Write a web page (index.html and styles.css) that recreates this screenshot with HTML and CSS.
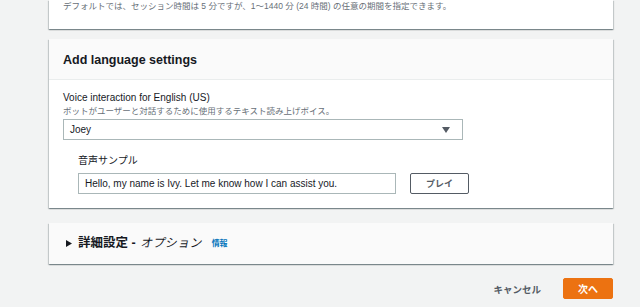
FILE: index.html
```html
<!DOCTYPE html>
<html lang="ja">
<head>
    <meta charset="UTF-8">
    <meta name="viewport" content="width=device-width, initial-scale=1.0">
    <title>ボットの作成</title>
    <link rel="stylesheet" href="styles.css">
</head>
<body>
    <div class="page">
        <!-- セッションタイムアウトの続き -->
        <div class="card card-top">
            <p class="hint">デフォルトでは、セッション時間は 5 分ですが、1〜1440 分 (24 時間) の任意の期間を指定できます。</p>
        </div>

        <div class="card">
            <div class="card-header">
                <h2>Add language settings</h2>
            </div>
            <div class="card-body">
                <div class="field-label">Voice interaction for English (US)</div>
                <div class="field-desc">ボットがユーザーと対話するために使用するテキスト読み上げボイス。</div>
                <div class="select">
                    <span>Joey</span>
                    <svg class="caret" width="8" height="6" viewBox="0 0 8 6"><path d="M0 0h8L4 6z" fill="#545b64"/></svg>
                </div>

                <div class="sample">
                    <div class="field-label">音声サンプル</div>
                    <div class="sample-row">
                        <input type="text" class="text-input" value="Hello, my name is Ivy. Let me know how I can assist you.">
                        <button class="btn-normal">プレイ</button>
                    </div>
                </div>
            </div>
        </div>

        <div class="card card-expand">
            <svg class="expand-icon" width="6" height="7" viewBox="0 0 6 7"><path d="M0 0l6 3.5L0 7z" fill="#16191f"/></svg>
            <span class="expand-title">詳細設定 - </span>
            <span class="expand-opt">オプション</span>
            <a href="#" class="info-link">情報</a>
        </div>

        <div class="actions">
            <button class="btn-link">キャンセル</button>
            <button class="btn-primary">次へ</button>
        </div>
    </div>
</body>
</html>
```

FILE: styles.css
```css
/* 全体 */
body {
    margin: 0;
    background-color: #f2f3f3;
    font-family: "Liberation Sans", "Noto Sans CJK JP", sans-serif;
    color: #16191f;
}

.page {
    width: 564px;
    margin-left: 49px;
}

/* カード */
.card {
    background-color: #fff;
    box-shadow: 0 1px 1px 0 rgba(0, 28, 36, 0.3), 1px 1px 1px 0 rgba(0, 28, 36, 0.15), -1px 1px 1px 0 rgba(0, 28, 36, 0.15);
    margin-bottom: 10px;
}

.card-top {
    padding: 0 14px 17px;
}

.hint {
    margin: 0;
    font-size: 8.5px;
    line-height: 12px;
    color: #687078;
}

.card-header {
    background-color: #fafafa;
    border-bottom: 1px solid #eaeded;
    padding: 13px 14px 11px;
}

h2 {
    margin: 0;
    font-size: 12.5px;
    line-height: 16px;
    font-weight: bold;
}

.card-body {
    padding: 11px 14px 14px;
}

.field-label {
    font-size: 10px;
    line-height: 14px;
}

.field-desc {
    font-size: 8.5px;
    line-height: 12px;
    color: #687078;
}

.select {
    margin-top: 2px;
    width: 400px;
    height: 21px;
    box-sizing: border-box;
    border: 1px solid #aab7b8;
    display: flex;
    align-items: center;
    justify-content: space-between;
    padding: 0 12px 0 6px;
    font-size: 10px;
}

.sample {
    margin-top: 14px;
    padding-left: 15px;
}

.sample-row {
    margin-top: 5px;
    display: flex;
    gap: 14px;
}

.text-input {
    width: 318px;
    height: 21px;
    box-sizing: border-box;
    border: 1px solid #aab7b8;
    padding: 0 6px;
    font-family: inherit;
    font-size: 10px;
    color: #16191f;
    margin: 0;
}

.btn-normal {
    width: 59px;
    height: 21px;
    background: #fff;
    border: 1px solid #545b64;
    border-radius: 2px;
    color: #545b64;
    font-family: inherit;
    font-size: 9px;
    font-weight: bold;
    padding: 0;
}

/* 折りたたみ */
.card-expand {
    margin-top: 15px;
    background-color: #fafafa;
    padding: 12px 17px;
    display: flex;
    align-items: center;
    line-height: 17px;
}

.expand-icon {
    margin-right: 6px;
}

.expand-title {
    font-size: 12.5px;
    font-weight: bold;
    white-space: pre;
}

/* 和文は斜体がないので傾けて表示 */
.expand-opt {
    display: inline-block;
    font-size: 12px;
    letter-spacing: 0.3px;
    color: #16191f;
    margin-left: 2px;
    transform: skewX(-12deg);
}

.info-link {
    margin-left: 9px;
    font-size: 8px;
    font-weight: bold;
    color: #0073bb;
    text-decoration: none;
}

/* ボタン */
.actions {
    margin-top: 14px;
    display: flex;
    justify-content: flex-end;
    align-items: center;
    gap: 22px;
}

.btn-link {
    background: none;
    border: none;
    padding: 0;
    font-family: inherit;
    font-size: 9.5px;
    font-weight: bold;
    color: #545b64;
}

.btn-primary {
    width: 50px;
    height: 21px;
    background-color: #ec7211;
    border: 1px solid #ec7211;
    border-radius: 2px;
    color: #fff;
    font-family: inherit;
    font-size: 10px;
    font-weight: bold;
    padding: 0;
}
```
